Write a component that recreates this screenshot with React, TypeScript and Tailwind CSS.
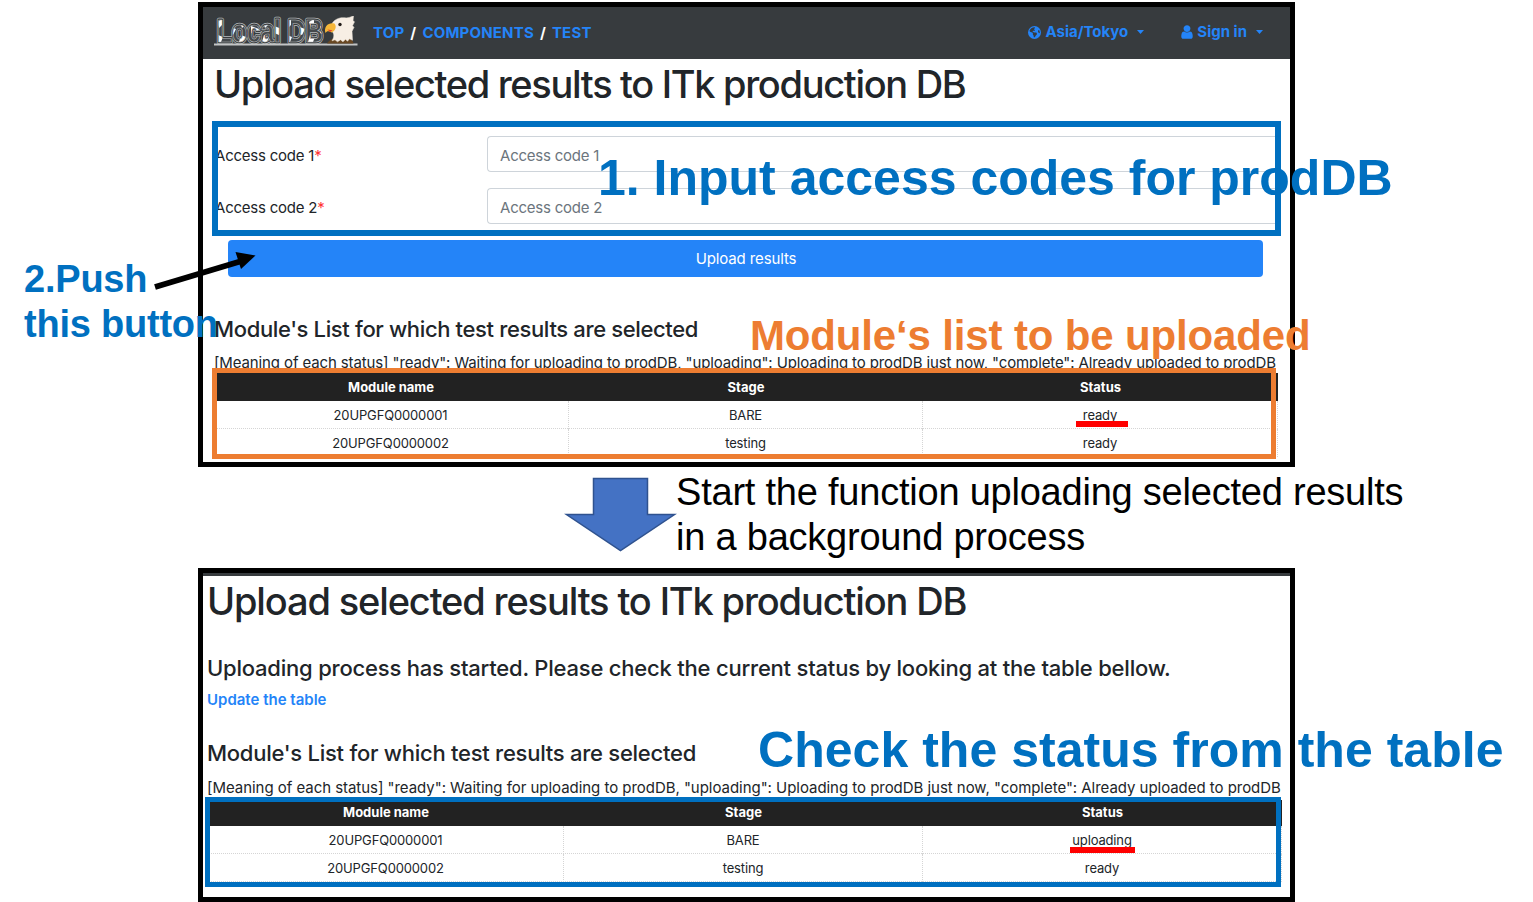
import type { ReactNode } from "react";
import { FaEarthAmericas } from "react-icons/fa6";

type Row = { name: string; stage: string; status: string };

const before: Row[] = [
  { name: "20UPGFQ0000001", stage: "BARE", status: "ready" },
  { name: "20UPGFQ0000002", stage: "testing", status: "ready" },
];
const after: Row[] = [
  { name: "20UPGFQ0000001", stage: "BARE", status: "uploading" },
  { name: "20UPGFQ0000002", stage: "testing", status: "ready" },
];

const legend =
  '[Meaning of each status] "ready": Waiting for uploading to prodDB, "uploading": Uploading to prodDB just now, "complete": Already uploaded to prodDB';

function Logo() {
  return (
    <svg className="h-[34px] w-[146px] shrink-0" viewBox="0 0 146 34">
      <defs>
        <pattern id="patches" width="23" height="30" patternUnits="userSpaceOnUse">
          <path d="M0 0h23v30H0z" fill="#45494c" />
          <path d="M3 6l5-3v6l-3 3zM14 10l8 3-3 6-5-2zM4 19l5 2-2 5H2z" fill="#fff" />
        </pattern>
      </defs>
      <g fontFamily="Liberation Sans, sans-serif" fontWeight="700" fontSize="31" strokeLinejoin="round">
        <text x="3" y="26" textLength="106" lengthAdjust="spacingAndGlyphs" fill="url(#patches)" stroke="#b9bbbd" strokeWidth="4.400" paintOrder="stroke">
          Local DB
        </text>
        <text x="3" y="26" textLength="106" lengthAdjust="spacingAndGlyphs" fill="none" stroke="#373b3e" strokeWidth="2.800" aria-hidden="true">
          Local DB
        </text>
        <text x="3" y="26" textLength="106" lengthAdjust="spacingAndGlyphs" fill="url(#patches)" stroke="#b9bbbd" strokeWidth="0.700" aria-hidden="true">
          Local DB
        </text>
      </g>
      <path d="M0 28.500h143.500" stroke="#c3c5c6" strokeWidth="1.800" />
      <path d="M113 27.500c2-3 4-5 8-5h13c3 0 5 2 5.500 5z" fill="#684722" />
      <path d="M118 7c2-4 7-6.500 12-6c4 .5 6-.5 9.500-2l-.5 5 1.500 1-2 4 1.500 1.500-2 4 .5 9-3-1.500-2 2.500-2-2-2.500 2.500-2.500-2-3 2-2.500-2-3 1c3-5 2-8-1-10z" transform="translate(0 .8)" fill="#f7eee4" stroke="#f7eee4" strokeWidth="0.500" />
      <path d="M120.500 7.500c-6-1.500-11 3-9 9.500 1.500-2.500 3.500-2 6-.5 4-1.500 5.500-6 3-9z" fill="#f5b638" />
      <path d="M113.500 13.500l5 .8-2.500 1.700z" fill="#e54b2c" />
      <circle cx="126" cy="8.500" r="1.700" fill="#211b18" />
    </svg>
  );
}

function UserIcon() {
  return (
    <svg className="ml-[37px] mr-1 h-[16px] w-[12px]" viewBox="0 0 1280 1792" fill="currentColor">
      <path d="M1280 1399q0 109-62.500 187t-150.500 78h-854q-88 0-150.500-78t-62.500-187q0-85 8.500-160.500t31.500-152 58.500-131 94-89 134.500-34.500q131 128 313 128t313-128q76 0 134.500 34.500t94 89 58.500 131 31.500 152 8.500 160.500zm-256-887q0 159-112.500 271.500t-271.500 112.500-271.500-112.500-112.500-271.500 112.500-271.500 271.500-112.500 271.500 112.500 112.500 271.500z" />
    </svg>
  );
}

function Caret() {
  return (
    <svg className="-mt-[1px] ml-[9px] h-[4px] w-[7px]" viewBox="0 0 7 4" fill="currentColor">
      <path d="M0 0h7L3.500 4z" />
    </svg>
  );
}

function Navbar() {
  return (
    <nav className="flex h-[52px] items-center bg-[#373b3e] pl-[11px] text-[15px] font-bold text-[#2484f8]">
      <Logo />
      <div className="ml-[13px] flex gap-[6px] whitespace-nowrap tracking-[0.18px]">
        <a>TOP</a>
        <span className="text-white">/</span>
        <a>COMPONENTS</a>
        <span className="text-white">/</span>
        <a>TEST</a>
      </div>
      <div className="ml-auto mr-[27px] flex items-center whitespace-nowrap pb-[2px]">
        <FaEarthAmericas className="mr-1 size-[13px]" />
        <span>Asia/Tokyo</span>
        <Caret />
        <UserIcon />
        <span>Sign in</span>
        <Caret />
      </div>
    </nav>
  );
}

function Field({ label }: { label: string }) {
  return (
    <div className="flex h-[36px] items-center text-[15px] tracking-[-0.22px] text-[#212529]">
      <label className="w-[272px] whitespace-nowrap pt-[4px]">
        {label}
        <span className="text-[#f33]">*</span>
      </label>
      <div className="flex h-full flex-1 items-center rounded-l border border-r-0 border-[#ced4da] pl-3 pt-[4px] text-[#6c757d]">
        {label}
      </div>
    </div>
  );
}

function Table({ rows, columns, header }: { rows: Row[]; columns: string; header: string }) {
  return (
    <div className="text-[13px] text-[#212529]">
      <div className={`grid items-center bg-[#222] text-center font-bold text-white ${columns} ${header}`}>
        <span>Module name</span>
        <span>Stage</span>
        <span>Status</span>
      </div>
      {rows.map((row) => (
        <div key={row.name} className={`grid h-[28px] border-b border-dotted border-[#d5d5d5] text-center leading-[28px] tracking-[-0.15px] ${columns}`}>
          <span className="border-r border-dotted border-[#d5d5d5]">{row.name}</span>
          <span className="border-r border-dotted border-[#d5d5d5]">{row.stage}</span>
          <span className="border-r border-dotted border-[#d5d5d5]">{row.status}</span>
        </div>
      ))}
    </div>
  );
}

function Note({ className, children }: { className: string; children: ReactNode }) {
  return (
    <p className={`absolute whitespace-nowrap font-['Liberation_Sans',Arial,sans-serif] ${className}`}>{children}</p>
  );
}

export default function App() {
  return (
    <main className="relative h-[902px] w-[1533px] overflow-hidden bg-white pl-[198px] pt-[2px] font-['Inter',sans-serif]">
      <section className="h-[465px] w-[1097px] overflow-hidden border-[5px] border-black bg-white">
        <Navbar />
        <h1 className="ml-[11px] h-[50px] whitespace-nowrap text-[38px] font-medium leading-[50px] tracking-[-1.32px] text-[#212529]">
          Upload selected results to ITk production DB
        </h1>
        <div className="ml-[11px] mr-[12px] mt-[27px] flex flex-col gap-4 pl-[1px]">
          <Field label="Access code 1" />
          <Field label="Access code 2" />
        </div>
        <button className="ml-[25px] mt-[16px] block h-[37px] w-[1035px] rounded-[4px] bg-[#2484f8] pl-[1px] pt-[1px] text-[15px] tracking-[-0.12px] text-white">
          Upload results
        </button>
        <h2 className="ml-[11px] mt-[36px] whitespace-nowrap text-[22px] font-medium leading-[32px] tracking-[-0.36px] text-[#212529]">
          Module's List for which test results are selected
        </h2>
        <p className="ml-[11px] mt-[6px] h-[22px] whitespace-nowrap text-[15px] leading-[24px] tracking-[-0.12px] text-[#212529]">{legend}</p>
        <div className="ml-[10px] w-[1065px]">
          <Table rows={before} columns="grid-cols-[356px_354px_355px]" header="h-[28px] pt-[2px]" />
        </div>
      </section>

      <div className="flex h-[101px] pl-[365px] pt-[10px]">
        <svg className="h-[76px] w-[116px]" viewBox="0 0 116 76">
          <path d="M30.500 1.500h54V37.500h27L57.500 73.500L3.500 37.500h27z" fill="#4472c4" stroke="#2f528f" strokeWidth="1.500" />
        </svg>
        <p className="-ml-[3px] -mt-[7px] whitespace-nowrap font-['Liberation_Sans',Arial,sans-serif] text-[38px] leading-[45px] tracking-[-0.22px] text-black">
          Start the function uploading selected results
          <br />
          in a background process
        </p>
      </div>

      <section className="h-[334px] w-[1097px] overflow-hidden border-[5px] border-black bg-white">
        <div className="h-[3px] bg-[#373b3e]" />
        <h1 className="ml-[4px] h-[50px] whitespace-nowrap text-[38px] font-medium leading-[50px] tracking-[-1.14px] text-[#212529]">
          Upload selected results to ITk production DB
        </h1>
        <h2 className="ml-[4px] mt-[26px] whitespace-nowrap text-[22px] font-medium leading-[32px] tracking-[-0.21px] text-[#212529]">
          Uploading process has started. Please check the current status by looking at the table bellow.
        </h2>
        <a className="ml-[4px] mt-[4px] block whitespace-nowrap text-[15px] font-semibold leading-[24px] text-[#2484f8]">
          Update the table
        </a>
        <h2 className="ml-[4px] mt-[25px] whitespace-nowrap text-[22px] font-medium leading-[32px] tracking-[-0.26px] text-[#212529]">
          Module's List for which test results are selected
        </h2>
        <p className="ml-[4px] mt-[7px] h-[24px] whitespace-nowrap text-[15px] leading-[24px] tracking-[-0.04px] text-[#212529]">{legend}</p>
        <div className="ml-[5px] w-[1074px]">
          <Table rows={after} columns="grid-cols-[356px_359px_359px]" header="h-[26px]" />
        </div>
      </section>

      <div className="absolute left-[212px] top-[121px] h-[115px] w-[1069px] border-[6px] border-[#0070c0]" />
      <div className="absolute left-[212px] top-[368px] h-[91px] w-[1064px] border-[5px] border-[#ed7d31]" />
      <div className="absolute left-[205px] top-[797px] h-[90px] w-[1076px] border-[5px] border-[#0070c0]" />
      <div className="absolute left-[1076px] top-[421px] h-[6px] w-[52px] bg-[#f00]" />
      <div className="absolute left-[1070px] top-[847px] h-[6px] w-[65px] bg-[#f00]" />

      <Note className="left-[598px] top-[149px] text-[50px] font-bold leading-[58px] text-[#0070c0]">
        1. Input access codes for prodDB
      </Note>
      <Note className="left-[24px] top-[257px] text-[38px] font-bold leading-[45px] tracking-[-0.22px] text-[#0070c0]">
        2.Push
        <br />
        this button
      </Note>
      <Note className="left-[750px] top-[311px] text-[42px] font-bold leading-[50px] tracking-[-0.15px] text-[#ed7d31]">
        Module‘s list to be uploaded
      </Note>
      <Note className="left-[758px] top-[721px] text-[50px] font-bold leading-[58px] tracking-[0.03px] text-[#0070c0]">
        Check the status from the table
      </Note>
      <svg className="absolute left-[150px] top-[245px] h-[50px] w-[110px]" viewBox="0 0 110 50">
        <path d="M5 42L90 16.500" stroke="#000" strokeWidth="6" />
        <path d="M85.500 7L105.500 10.500L91 24z" />
      </svg>
    </main>
  );
}
